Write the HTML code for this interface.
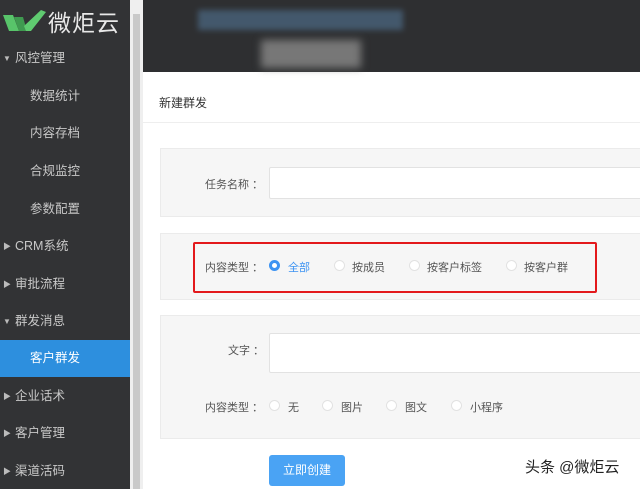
<!DOCTYPE html><html><head><meta charset="utf-8"><style>
*{margin:0;padding:0;box-sizing:border-box}
body{width:640px;height:489px;overflow:hidden;position:relative;background:#fff;font-family:"Liberation Sans","Noto Sans CJK SC",sans-serif;font-size:12px;color:#555}
.sb{position:absolute;left:0;top:0;width:130px;height:489px;background:#323335}
.it{position:absolute;left:0;width:130px;height:37px;line-height:37px;color:#c8c8c8;font-size:12.5px}
.it.p{padding-left:15px}.it.c{padding-left:30px}
.it .a{position:absolute;left:3px;font-size:8px;color:#bbb}
.scr{position:absolute;left:130px;top:0;width:13px;height:489px;background:#efefef}
.scr div{position:absolute;left:3px;top:14px;width:7px;height:475px;background:#c9c9c9}
.hd{position:absolute;left:143px;top:0;width:497px;height:72px;background:#2e2f31}
.pn{position:absolute;left:160px;width:490px;background:#f6f6f6;border:1px solid #ebebeb}
.inp{position:absolute;background:#fff;border:1px solid #e2e2e2;border-radius:2px}
.lb{position:absolute;font-size:11px;color:#555}
.r{position:absolute;width:11px;height:11px;border-radius:50%;border:1px solid #e2e2e2;background:#fff}
</style></head><body>
<div class="sb">
<div style="position:absolute;left:2px;top:6px;width:44px;height:26px">
<svg width="44" height="26"><path d="M1 9 L11 9 L17 25 L7 25Z" fill="#58c46a"/><path d="M12 11 L21 11 L25 25 L17 25Z" fill="#3f9a50"/><path d="M22 20 L39 4 L44 6 L29 25 L24 25Z" fill="#5fcb70"/></svg></div>
<div style="position:absolute;left:48px;top:4px;color:#e8e8e8;font-size:23px;letter-spacing:1px">微炬云</div>
<div class="it p" style="top:40px"><span class="a">▼</span>风控管理</div>
<div class="it c" style="top:78px">数据统计</div>
<div class="it c" style="top:115px">内容存档</div>
<div class="it c" style="top:153px">合规监控</div>
<div class="it c" style="top:191px">参数配置</div>
<div class="it p" style="top:228px"><span class="a">▶</span>CRM系统</div>
<div class="it p" style="top:266px"><span class="a">▶</span>审批流程</div>
<div class="it p" style="top:303px"><span class="a">▼</span>群发消息</div>
<div class="it c" style="top:340px;background:#2d8fde;color:#fff">客户群发</div>
<div class="it p" style="top:378px"><span class="a">▶</span>企业话术</div>
<div class="it p" style="top:415px"><span class="a">▶</span>客户管理</div>
<div class="it p" style="top:453px"><span class="a">▶</span>渠道活码</div>
</div>
<div class="scr"><div></div></div>
<div class="hd">
<div style="position:absolute;left:55px;top:10px;width:205px;height:20px;background:#4d6a85;opacity:.7;filter:blur(3px)"></div>
<div style="position:absolute;left:118px;top:40px;width:100px;height:28px;background:#777;filter:blur(4px)"></div>
</div>
<div style="position:absolute;left:159px;top:94px;font-size:12px;color:#333">新建群发</div>
<div style="position:absolute;left:143px;top:122px;width:497px;height:1px;background:#eee"></div>
<div class="pn" style="top:148px;height:69px"></div>
<div class="lb" style="left:205px;top:176px">任务名称 ：</div>
<div class="inp" style="left:269px;top:167px;width:380px;height:32px"></div>
<div class="pn" style="top:233px;height:67px"></div>
<div style="position:absolute;left:193px;top:242px;width:404px;height:51px;border:2px solid #e3191c;border-radius:2px"></div>
<div class="lb" style="left:205px;top:259px">内容类型 ：</div>
<div class="r" style="left:269px;top:260px;border:3px solid #3d93f2;background:#fff"></div>
<div class="lb" style="left:288px;top:259px;color:#3d93f2">全部</div>
<div class="r" style="left:334px;top:260px"></div><div class="lb" style="left:352px;top:259px">按成员</div>
<div class="r" style="left:409px;top:260px"></div><div class="lb" style="left:427px;top:259px">按客户标签</div>
<div class="r" style="left:506px;top:260px"></div><div class="lb" style="left:524px;top:259px">按客户群</div>
<div class="pn" style="top:315px;height:124px"></div>
<div class="lb" style="left:228px;top:342px">文字 ：</div>
<div class="inp" style="left:269px;top:333px;width:380px;height:40px"></div>
<div class="lb" style="left:205px;top:399px">内容类型 ：</div>
<div class="r" style="left:269px;top:400px"></div><div class="lb" style="left:288px;top:399px">无</div>
<div class="r" style="left:322px;top:400px"></div><div class="lb" style="left:341px;top:399px">图片</div>
<div class="r" style="left:386px;top:400px"></div><div class="lb" style="left:405px;top:399px">图文</div>
<div class="r" style="left:451px;top:400px"></div><div class="lb" style="left:470px;top:399px">小程序</div>
<div style="position:absolute;left:269px;top:455px;width:76px;height:31px;background:#4aa3f4;border-radius:3px;color:#fff;font-size:12px;text-align:center;line-height:31px">立即创建</div>
<div style="position:absolute;left:525px;top:456px;font-size:15px;color:#222;text-shadow:0 0 2px #fff">头条 @微炬云</div>
</body></html>
